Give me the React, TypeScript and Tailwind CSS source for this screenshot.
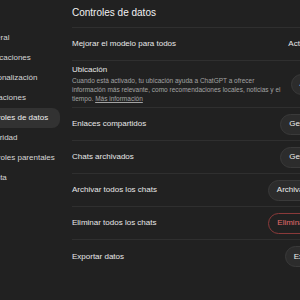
import { ChevronRight } from "lucide-react";

const navItems = [
  "General",
  "Notificaciones",
  "Personalización",
  "Aplicaciones",
  "Controles de datos",
  "Seguridad",
  "Controles parentales",
  "Cuenta",
];

const Pill = ({ label, danger }: { label: string; danger?: boolean }) => {
  if (danger) {
    return (
      <button className="h-[21px] px-2 rounded-full border border-[#8a3a3a] text-[#e56b6b] text-[8px] whitespace-nowrap">
        {label}
      </button>
    );
  }
  return (
    <button className="h-[21px] px-2 rounded-full border border-[#3a3a3a] bg-[#2c2c2c] text-[#ececec] text-[8px] whitespace-nowrap">
      {label}
    </button>
  );
};

const Row = ({ label, children }: { label: string; children: React.ReactNode }) => (
  <div className="h-[33px] flex items-center justify-between border-b border-[#2f2f2f]">
    <span className="text-[8px] text-[#e8e8e8]">{label}</span>
    {children}
  </div>
);

export default function App() {
  return (
    <div
      className="w-[300px] h-[300px] overflow-hidden bg-[#212121] flex"
      style={{ fontFamily: '"Liberation Sans", Arial, sans-serif' }}
    >
      <div className="w-[60px] shrink-0 overflow-hidden pt-[28px]">
        {navItems.map((item) => {
          const active = item === "Controles de datos";
          return (
            <div
              key={item}
              className={
                active
                  ? "h-[20px] -ml-[26px] pl-[7px] flex items-center rounded-lg bg-[#323232] text-[#f0f0f0] text-[8px] whitespace-nowrap"
                  : "h-[20px] -ml-[26px] pl-[7px] flex items-center text-[#d6d6d6] text-[8px] whitespace-nowrap"
              }
            >
              {item}
            </div>
          );
        })}
      </div>

      <div className="ml-[12px] w-[261px] shrink-0">
        <div className="pt-[6px] pb-[7px] leading-[14px] text-[10px] text-[#f2f2f2] border-b border-[#2f2f2f]">
          Controles de datos
        </div>

        <Row label="Mejorar el modelo para todos">
          <div className="flex items-center gap-[3px] text-[8px] text-[#e8e8e8] whitespace-nowrap">
            Activado
            <ChevronRight size={11} strokeWidth={2} />
          </div>
        </Row>

        <div className="pt-[4px] pb-[4px] flex items-center justify-between border-b border-[#2f2f2f]">
          <div className="w-[215px]">
            <div className="text-[8px] leading-[10px] text-[#e8e8e8]">Ubicación</div>
            <p className="mt-[1px] text-[6.5px] leading-[9px] text-[#a3a3a3]">
              Cuando está activado, tu ubicación ayuda a ChatGPT a ofrecer información más relevante, como
              recomendaciones locales, noticias y el tiempo.{" "}
              <span className="underline">Más información</span>
            </p>
          </div>
          <Pill label="Activar" />
        </div>

        <Row label="Enlaces compartidos">
          <Pill label="Gestionar" />
        </Row>
        <Row label="Chats archivados">
          <Pill label="Gestionar" />
        </Row>
        <Row label="Archivar todos los chats">
          <Pill label="Archivar todo" />
        </Row>
        <Row label="Eliminar todos los chats">
          <Pill label="Eliminar todo" danger />
        </Row>
        <div className="h-[33px] flex items-center justify-between">
          <span className="text-[8px] text-[#e8e8e8]">Exportar datos</span>
          <Pill label="Exportar" />
        </div>
      </div>
    </div>
  );
}
